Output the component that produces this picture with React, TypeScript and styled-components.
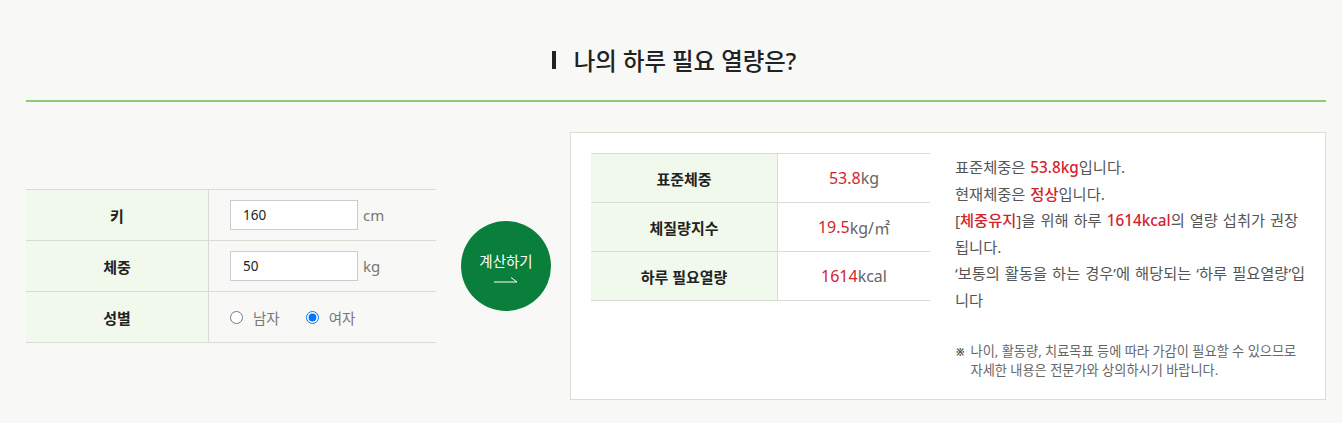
import React from "react";
import styled, { createGlobalStyle } from "styled-components";

const Global = createGlobalStyle`
  html, body { margin: 0; padding: 0; background: #f8f8f6; }
  body { font-family: "Noto Sans", "Noto Sans CJK KR", sans-serif; color: #333; }
  * { box-sizing: border-box; }
`;

const Page = styled.div`
  width: 1300px;
  margin-left: 26px;
  height: 423px;
`;

const TitleBar = styled.div`
  height: 102px;
  padding-top: 40px;
  border-bottom: 2px solid #8ccc74;
  display: flex;
  justify-content: center;
`;

const Title = styled.h2`
  margin: 0 0 0 -4px;
  display: flex;
  align-items: center;
  gap: 18px;
  height: 40px;
  font-size: 23.4px;
  font-weight: 500;
  color: #222;
  &::before {
    content: "";
    width: 4px;
    height: 18px;
    background: #222;
  }
`;

const Content = styled.div`
  display: flex;
  align-items: center;
  margin-top: 30px;
`;

const InputTable = styled.div`
  width: 410px;
  border-top: 1px solid #d8dcd3;
`;

const Row = styled.div<{ $h: number }>`
  display: grid;
  grid-template-columns: 183px 1fr;
  height: ${(p) => p.$h}px;
  border-bottom: 1px solid #d8dcd3;
`;

const Label = styled.div`
  background: #f0f9ec;
  border-right: 1px solid #d8dcd3;
  display: flex;
  align-items: center;
  justify-content: center;
  font-size: 15px;
  font-weight: 700;
  color: #222;
`;

const Field = styled.div`
  display: flex;
  align-items: center;
  padding-left: 21px;
`;

const TextInput = styled.input`
  width: 128px;
  height: 30px;
  border: 1px solid #ccc;
  background: #fff;
  padding: 0 12px;
  font-family: "Noto Sans", "Noto Sans CJK KR", sans-serif;
  font-size: 13.5px;
  color: #222;
  outline: none;
`;

const Unit = styled.span`
  margin-left: 5px;
  font-size: 15px;
  color: #777;
`;

const RadioLabel = styled.label`
  display: flex;
  align-items: center;
  font-size: 14.5px;
  color: #777;
  margin-right: 26px;
  input {
    margin: 0 10px 0 0;
    width: 13px;
    height: 13px;
  }
`;

const CalcButton = styled.button`
  width: 90px;
  height: 90px;
  border-radius: 50%;
  border: none;
  background: #0a7e3b;
  color: #fff;
  margin: 0 19px 0 25px;
  display: flex;
  flex-direction: column;
  align-items: center;
  justify-content: center;
  gap: 4px;
  font-family: "Noto Sans", "Noto Sans CJK KR", sans-serif;
  font-size: 14.5px;
  padding: 0;
  cursor: pointer;
`;

const ResultBox = styled.div`
  width: 756px;
  height: 268px;
  background: #fff;
  border: 1px solid #d8dfd3;
  padding: 20px;
  display: flex;
  gap: 25px;
`;

const ResultTable = styled.div`
  width: 339px;
  flex-shrink: 0;
  align-self: flex-start;
  border-top: 1px solid #d8dcd3;
`;

const ResultRow = styled.div`
  display: grid;
  grid-template-columns: 187px 1fr;
  height: 49px;
  border-bottom: 1px solid #d8dcd3;
`;

const Value = styled.div`
  display: flex;
  align-items: center;
  justify-content: center;
  font-size: 16px;
  color: #666;
`;

const Red = styled.span<{ $bold?: boolean }>`
  color: #d3242e;
  font-weight: ${(p) => (p.$bold ? 500 : 400)};
`;

const Desc = styled.div`
  display: flex;
  flex-direction: column;
  padding-top: 1px;
`;

const Paragraph = styled.p`
  margin: 0;
  font-size: 15.3px;
  line-height: 26.5px;
  color: #555;
  word-spacing: 1px;
  white-space: nowrap;
`;

const Note = styled.p`
  margin: 29px 0 0;
  display: flex;
  gap: 6px;
  font-size: 13.2px;
  line-height: 19px;
  color: #666;
`;

const Mark = styled.span`
  font-size: 10px;
  padding-top: 1px;
  padding-left: 1px;
  color: #444;
  font-weight: 700;
`;

export default function App() {
  return (
    <>
      <Global />
      <Page>
        <TitleBar>
          <Title>나의 하루 필요 열량은?</Title>
        </TitleBar>
        <Content>
          <InputTable>
            <Row $h={51}>
              <Label>키</Label>
              <Field>
                <TextInput defaultValue="160" />
                <Unit>cm</Unit>
              </Field>
            </Row>
            <Row $h={51}>
              <Label>체중</Label>
              <Field>
                <TextInput defaultValue="50" />
                <Unit>kg</Unit>
              </Field>
            </Row>
            <Row $h={51}>
              <Label>성별</Label>
              <Field>
                <RadioLabel>
                  <input type="radio" name="sex" />
                  남자
                </RadioLabel>
                <RadioLabel>
                  <input type="radio" name="sex" defaultChecked />
                  여자
                </RadioLabel>
              </Field>
            </Row>
          </InputTable>
          <CalcButton>
            <span>계산하기</span>
            <svg width="26" height="8" viewBox="0 0 26 8">
              <path d="M1 7 H24 L18 2.5" fill="none" stroke="#fff" strokeWidth="1" />
            </svg>
          </CalcButton>
          <ResultBox>
            <ResultTable>
              <ResultRow>
                <Label>표준체중</Label>
                <Value>
                  <Red>53.8</Red>kg
                </Value>
              </ResultRow>
              <ResultRow>
                <Label>체질량지수</Label>
                <Value>
                  <Red>19.5</Red>kg/㎡
                </Value>
              </ResultRow>
              <ResultRow>
                <Label>하루 필요열량</Label>
                <Value>
                  <Red>1614</Red>kcal
                </Value>
              </ResultRow>
            </ResultTable>
            <Desc>
              <Paragraph>
                표준체중은 <Red $bold>53.8kg</Red>입니다.
                <br />
                현재체중은 <Red $bold>정상</Red>입니다.
                <br />[<Red $bold>체중유지</Red>]을 위해 하루 <Red $bold>1614kcal</Red>의 열량 섭취가 권장
                <br />
                됩니다.
                <br />
                ‘보통의 활동을 하는 경우’에 해당되는 ‘하루 필요열량’입
                <br />
                니다
              </Paragraph>
              <Note>
                <Mark>※</Mark>
                <span>
                  나이, 활동량, 치료목표 등에 따라 가감이 필요할 수 있으므로
                  <br />
                  자세한 내용은 전문가와 상의하시기 바랍니다.
                </span>
              </Note>
            </Desc>
          </ResultBox>
        </Content>
      </Page>
    </>
  );
}
